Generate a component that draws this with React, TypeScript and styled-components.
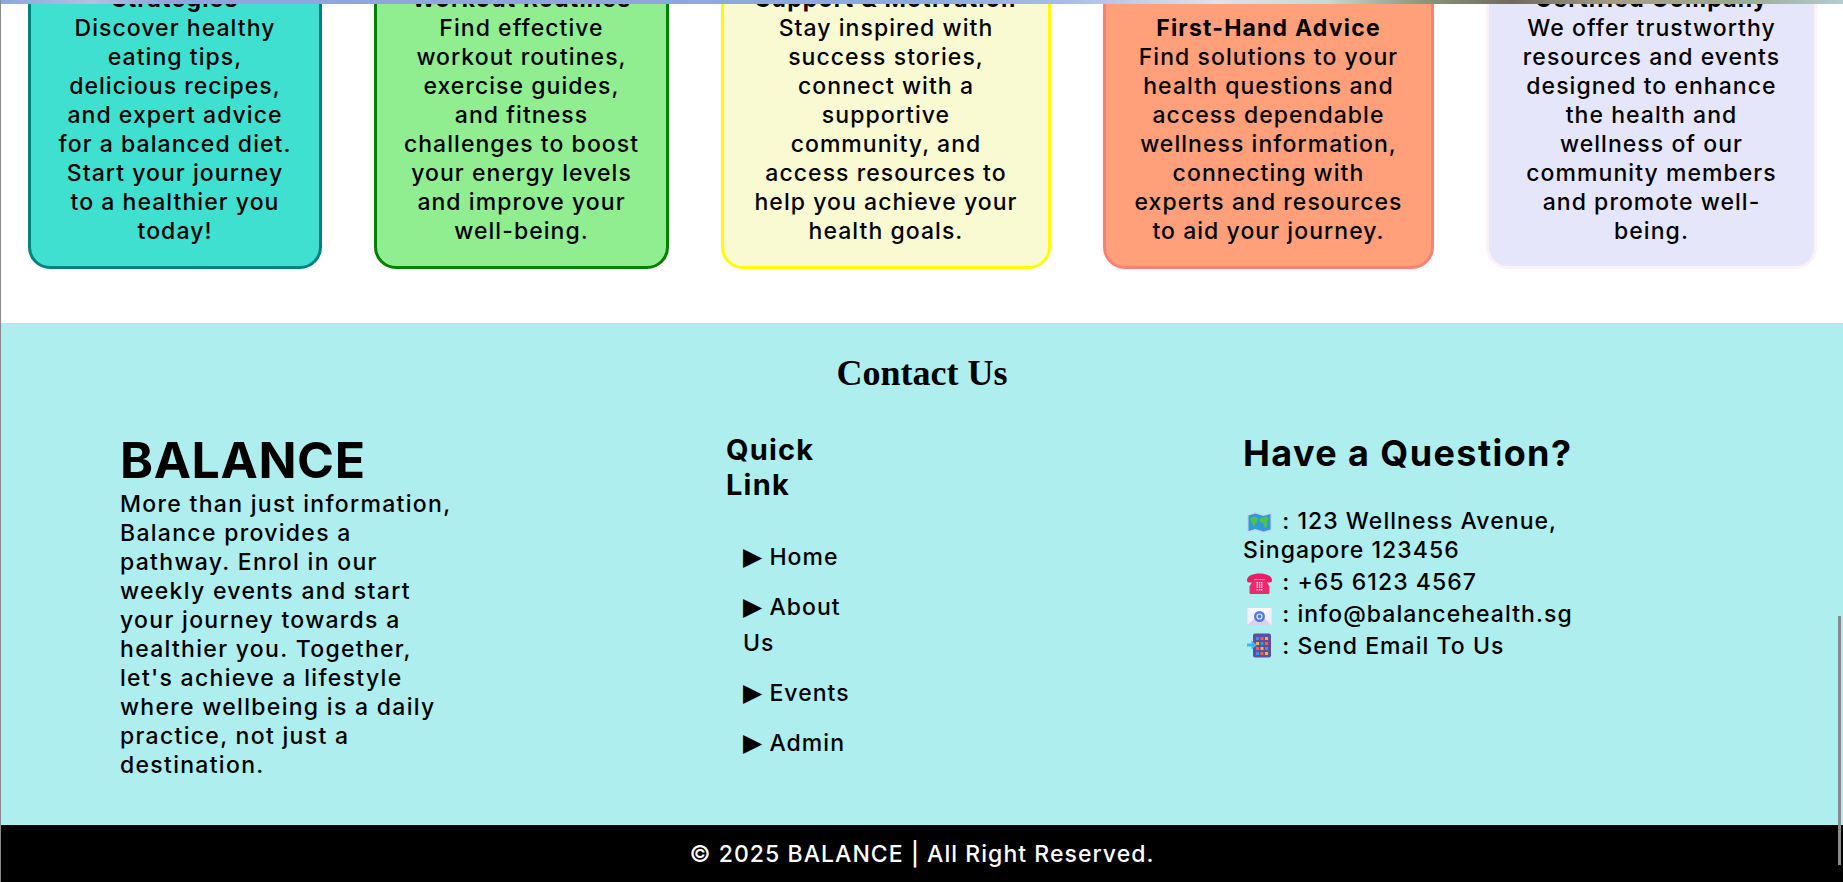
import React from 'react'
import styled, { createGlobalStyle } from 'styled-components'

const GlobalStyle = createGlobalStyle`
  html, body {
    margin: 0;
    height: 100%;
    overflow: hidden;
    background: #fff;
  }

  * {
    box-sizing: border-box;
  }
`

type Tone = { bg: string; line: string; width: number }

const cards: { title: string; text: string; tone: Tone }[] = [
	{
		title: 'Strategies',
		text: 'Discover healthy\neating tips,\ndelicious recipes,\nand expert advice\nfor a balanced diet.\nStart your journey\nto a healthier you\ntoday!',
		tone: { bg: '#40e0d0', line: '#008080', width: 294 },
	},
	{
		title: 'Workout Routines',
		text: 'Find effective\nworkout routines,\nexercise guides,\nand fitness\nchallenges to boost\nyour energy levels\nand improve your\nwell-being.',
		tone: { bg: '#90ee90', line: '#008000', width: 295 },
	},
	{
		title: 'Support & Motivation',
		text: 'Stay inspired with\nsuccess stories,\nconnect with a\nsupportive\ncommunity, and\naccess resources to\nhelp you achieve your\nhealth goals.',
		tone: { bg: '#fafad2', line: '#ffff00', width: 330 },
	},
	{
		title: 'First-Hand Advice',
		text: 'Find solutions to your\nhealth questions and\naccess dependable\nwellness information,\nconnecting with\nexperts and resources\nto aid your journey.',
		tone: { bg: '#ffa07a', line: '#fa8072', width: 331 },
	},
	{
		title: 'Certified Company',
		text: 'We offer trustworthy\nresources and events\ndesigned to enhance\nthe health and\nwellness of our\ncommunity members\nand promote well-\nbeing.',
		tone: { bg: '#e6e6fa', line: '#fff0f5', width: 331 },
	},
]

const links = ['Home', 'About Us', 'Events', 'Admin']

const brandText =
	"More than just information,\nBalance provides a\npathway. Enrol in our\nweekly events and start\nyour journey towards a\nhealthier you. Together,\nlet's achieve a lifestyle\nwhere wellbeing is a daily\npractice, not just a\ndestination."

const MapIcon = () => (
	<svg width="25" height="21" viewBox="0 0 25 21">
		<path d="M0 2.500l8.500-2.500 8 2.500 8.500-2.500v18.500l-8.500 2.500-8-2.500-8.500 2.500z" fill="#c9d3f2" />
		<path d="M1.500 3.500l7-2 8 2.500 7-2v15.500l-7 2-8-2.500-7 2z" fill="#2f9ad6" />
		<path d="M3 6l5-1.500 3 2-1 4-2 1-.5 3.500-2.500-3zM13 6l7-1.500 2 3-2 2 .5 5-3 1.500-1-4.500-3.500-2z" fill="#4fc24b" />
	</svg>
)

const PhoneIcon = () => (
	<svg width="25" height="21" viewBox="0 0 25 21">
		<path d="M0 7.500C0 2.500 6 .5 12.500.5S25 2.500 25 7.500c0 1.500-1 2-3.500 2-2.500 0-3.500-.5-3.500-2V6H7v1.500c0 1.500-1 2-3.500 2C1 9.500 0 9 0 7.500z" fill="#e91e63" />
		<path d="M6.500 6.500h12l4 7v6a1.500 1.500 0 0 1-1.500 1.500H4a1.500 1.500 0 0 1-1.500-1.500v-6z" fill="#ec2a6e" />
		<path d="M9.500 9h1.500v1.500H9.500zM11.800 9h1.500v1.500h-1.500zM14 9h1.500v1.500H14zM9.500 11.300h1.500v1.500H9.500zM11.800 11.300h1.500v1.500h-1.500zM14 11.300h1.500v1.500H14zM9.500 13.600h1.500v1.500H9.500zM11.800 13.600h1.500v1.500h-1.500zM14 13.600h1.500v1.500H14zM9.500 15.900h1.500v1.500H9.500zM11.800 15.900h1.500v1.500h-1.500zM14 15.900h1.500v1.500H14z" fill="#fbd3e0" />
	</svg>
)

const MailIcon = () => (
	<svg width="25" height="19" viewBox="0 0 25 19">
		<rect x="0.500" y="1" width="24" height="17" fill="#f3effa" />
		<path d="M.5 18l9-8.500h6l9 8.500z" fill="#dcd0f0" />
		<path d="M.5 1l12 10 12-10z" fill="#fbf9fe" />
		<circle cx="12.500" cy="9.500" r="5.500" fill="#4f7bdc" />
		<circle cx="12.500" cy="9.500" r="2.500" fill="none" stroke="#dfe8ff" strokeWidth="1.200" />
	</svg>
)

const DeviceIcon = () => (
	<svg width="25" height="25" viewBox="0 0 25 25">
		<rect x="6" y="0.500" width="18" height="24" rx="2" fill="#5d4f9e" />
		<path d="M9 4h3v3H9z" fill="#2f9ae0" />
		<path d="M13.500 4h3v3h-3z" fill="#f25c54" />
		<path d="M18 4h3v3h-3z" fill="#f9b233" />
		<path d="M9 9h3v3H9z" fill="#f9b233" />
		<path d="M13.500 9h3v3h-3z" fill="#2f9ae0" />
		<path d="M18 9h3v3h-3z" fill="#f25c54" />
		<path d="M9 14h3v3H9z" fill="#f25c54" />
		<path d="M13.500 14h3v3h-3z" fill="#f9b233" />
		<path d="M18 14h3v3h-3z" fill="#2f9ae0" />
		<path d="M9 19h3v3H9z" fill="#2f9ae0" />
		<path d="M13.500 19h3v3h-3z" fill="#f25c54" />
		<path d="M18 19h3v3h-3z" fill="#f9b233" />
		<path d="M0 10.500h4.500V7.500L10 12l-5.500 4.500v-3H0z" fill="#3db5f2" />
	</svg>
)

export default function App() {
	return (
		<Page>
			<GlobalStyle />
			<HeroEdge />

			<CardsSection>
				{cards.map((card) => (
					<Card key={card.title} $tone={card.tone}>
						<CardTitle>{card.title}</CardTitle>
						<CardText>{card.text}</CardText>
					</Card>
				))}
			</CardsSection>

			<ContactSection>
				<ContactTitle>Contact Us</ContactTitle>
				<ContactColumns>
					<BrandColumn>
						<Brand>BALANCE</Brand>
						<BrandText>{brandText}</BrandText>
					</BrandColumn>

					<LinkColumn>
						<LinkTitle>Quick Link</LinkTitle>
						<LinkList>
							{links.map((link) => (
								<LinkItem key={link}>
									<Arrow>▶</Arrow> {link}
								</LinkItem>
							))}
						</LinkList>
					</LinkColumn>

					<QuestionColumn>
						<QuestionTitle>Have a Question?</QuestionTitle>
						<InfoLine><MapIcon /> : 123 Wellness Avenue, Singapore 123456</InfoLine>
						<InfoLine><PhoneIcon /> : +65 6123 4567</InfoLine>
						<InfoLine><MailIcon /> : info@balancehealth.sg</InfoLine>
						<InfoLine><DeviceIcon /> : Send Email To Us</InfoLine>
					</QuestionColumn>
				</ContactColumns>
			</ContactSection>

			<Copyright>© 2025 BALANCE | All Right Reserved.</Copyright>
			<ScrollThumb />
		</Page>
	)
}

const bodyFont = `'Inter', 'Liberation Sans', sans-serif`

const Page = styled.div`
  height: 882px;
  overflow: hidden;
  display: flex;
  flex-direction: column;
  border-left: 1px solid #8a8a8a;
  font-family: ${bodyFont};
  font-weight: 500;
  font-size: 23px;
  letter-spacing: 1.05px;
  color: #000;
`

const HeroEdge = styled.div`
  flex: none;
  height: 4px;
  margin-left: -1px;
  background: linear-gradient(
    90deg,
    #8fa6dc 0%,
    #b3c0e2 5%,
    #8fa6dc 9%,
    #8fa8dd 50%,
    #a9bde6 58%,
    #dce3ee 66%,
    #c6d8d8 72%,
    #8a9a7a 77%,
    #6f6a60 82%,
    #a89f8c 88%,
    #9aa890 94%,
    #b5cdd0 100%
  );
`

const CardsSection = styled.section`
  flex: none;
  height: 319px;
  overflow: hidden;
  display: flex;
  align-items: flex-end;
  gap: 52px;
  padding: 0 0 54px 27px;
`

const Card = styled.article<{ $tone: Tone }>`
  flex: 0 0 ${({ $tone }) => $tone.width}px;
  min-height: 340px;
  display: flex;
  flex-direction: column;
  justify-content: flex-end;
  padding: 0 6px 20px;
  text-align: center;
  line-height: 29px;
  background: ${({ $tone }) => $tone.bg};
  border: 3px solid ${({ $tone }) => $tone.line};
  border-radius: 22px;
`

const CardTitle = styled.h3`
  margin: 0;
  font-size: 23px;
  font-weight: 700;
  letter-spacing: 1.2px;
`

const CardText = styled.p`
  margin: 0;
  white-space: pre-line;
`

const ContactSection = styled.section`
  flex: none;
  height: 502px;
  padding-top: 30px;
  background: #afeeee;
`

const ContactTitle = styled.h2`
  margin: 0 0 37px;
  text-align: center;
  font-family: 'Liberation Serif', 'Times New Roman', serif;
  font-size: 36px;
  line-height: 40px;
  font-weight: 700;
  letter-spacing: 0;
`

const ContactColumns = styled.div`
  display: flex;
  align-items: flex-start;
  padding-left: 119px;
`

const BrandColumn = styled.div`
  flex: 0 0 606px;
`

const Brand = styled.h1`
  margin: 0;
  font-size: 50px;
  line-height: 60px;
  font-weight: 700;
  letter-spacing: 0.6px;
`

const BrandText = styled.p`
  margin: 0;
  line-height: 29px;
  letter-spacing: 1.3px;
  white-space: pre-line;
`

const LinkColumn = styled.div`
  flex: 0 0 517px;
  padding-top: 2px;
`

const LinkTitle = styled.h3`
  width: 120px;
  margin: 0 0 37px;
  font-size: 29px;
  line-height: 35px;
  font-weight: 700;
  letter-spacing: 1.2px;
`

const LinkList = styled.ul`
  width: 124px;
  margin: 0;
  padding: 0 0 0 17px;
  list-style: none;
`

const LinkItem = styled.li`
  margin-bottom: 14px;
  line-height: 36px;
`

const Arrow = styled.span`
  font-family: 'DejaVu Sans', sans-serif;
  font-size: 25px;
  line-height: 1;
  letter-spacing: 0;
`

const QuestionColumn = styled.div`
  flex: 0 0 350px;
  padding-top: 1px;
`

const QuestionTitle = styled.h3`
  margin: 0 0 32px;
  font-size: 36px;
  line-height: 44px;
  font-weight: 700;
  letter-spacing: 1.4px;
`

const InfoLine = styled.p`
  margin: 0 0 3px;
  line-height: 29px;

  svg {
    margin: 0 3px -4px 4px;
  }
`

const Copyright = styled.footer`
  flex: none;
  height: 57px;
  display: flex;
  align-items: center;
  justify-content: center;
  background: #000;
  color: #fff;
`

const ScrollThumb = styled.div`
  position: fixed;
  top: 616px;
  right: 2px;
  width: 3px;
  height: 249px;
  background: #8a8a8a;
`
